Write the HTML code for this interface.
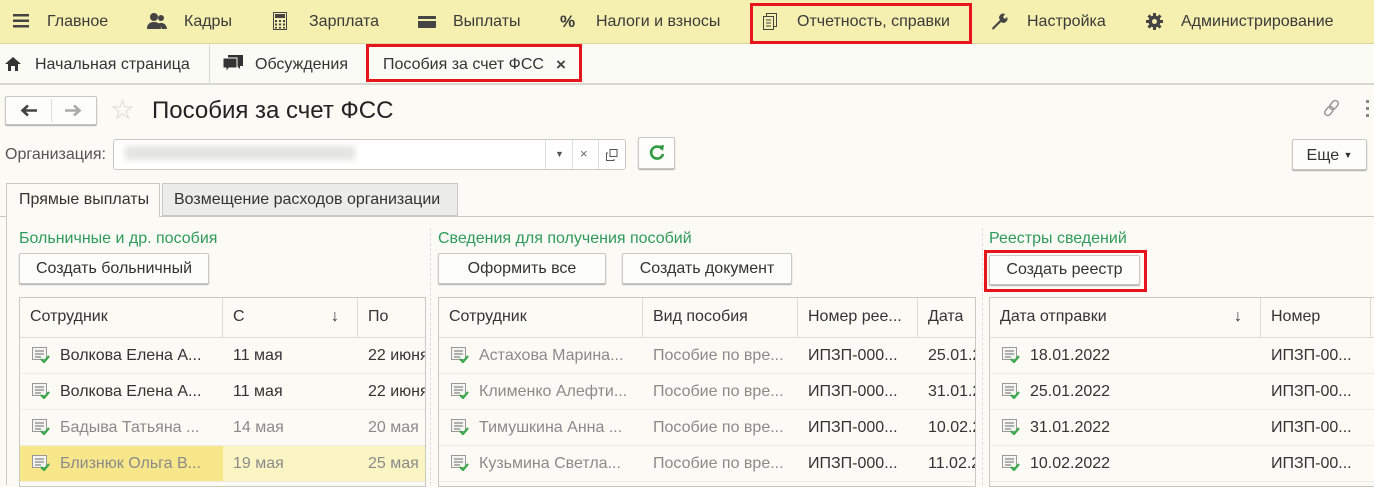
<!DOCTYPE html><html><head><meta charset="utf-8"><style>
*{box-sizing:border-box;margin:0;padding:0}
body{width:1374px;height:485px;overflow:hidden;background:#fbfaf4;font-family:"Liberation Sans",Arial,sans-serif;font-size:16px;color:#333;position:relative}
.a{position:absolute;white-space:nowrap}
.top{left:0;top:0;width:1374px;height:44px;background:#f5efb0;border-bottom:1px solid #dcd69a}
.ti{top:13px;font-size:16px;color:#3a3a3a}
.tabs{left:0;top:44px;width:1374px;height:41px;border-bottom:2px solid #d8d8d2;background:#fbfbf6}
.btn{background:#fdfdfb;border:1px solid #c9c9c3;border-radius:2px;box-shadow:0 1px 1px #aaa;text-align:center;line-height:30px;color:#333}
.red{border:3px solid #e8141b}
.grn{color:#2f9a5d;font-size:16px}
.tbl{border:1px solid #c9c9c3;background:#fbfaf4;overflow:hidden}
.hd{height:40px;border-bottom:1px solid #dcdcd6;background:#fbfaf4}
.c{position:absolute;top:0;height:100%;border-right:1px solid #dcdcd6;padding-left:10px;line-height:38px;overflow:hidden;white-space:nowrap}
.row{position:relative;height:36px;border-bottom:1px solid #ecebe4}
.row .c{line-height:36px;border-right:none}
.gray{color:#8a8a8a}
.ic{display:inline-block;vertical-align:-3px;margin-left:2px;margin-right:10px}
</style></head><body>
<div class="a top"></div>
<div class="a" style="left:13px;top:14px"><svg width="16" height="14"><rect y="0" width="16" height="2.5" fill="#444"/><rect y="5.5" width="16" height="2.5" fill="#444"/><rect y="11" width="16" height="2.5" fill="#444"/></svg></div>
<div class="a ti" style="left:47px">Главное</div>
<div class="a" style="left:146px;top:12px"><svg width="22" height="18"><circle cx="8" cy="5" r="4" fill="#444"/><path d="M1 17 Q1 10 8 10 Q15 10 15 17Z" fill="#444"/><circle cx="15" cy="6" r="3" fill="#444"/><path d="M13 11 Q20 10 21 17 H16Z" fill="#444"/></svg></div>
<div class="a ti" style="left:184px">Кадры</div>
<div class="a" style="left:273px;top:12px"><svg width="14" height="18"><rect x="0.5" y="0.5" width="13" height="17" fill="none" stroke="#444"/><rect x="2" y="2" width="10" height="4" fill="#444"/><g fill="#444"><rect x="2" y="8" width="2" height="2"/><rect x="6" y="8" width="2" height="2"/><rect x="10" y="8" width="2" height="2"/><rect x="2" y="11.5" width="2" height="2"/><rect x="6" y="11.5" width="2" height="2"/><rect x="10" y="11.5" width="2" height="2"/><rect x="2" y="15" width="2" height="1.5"/><rect x="6" y="15" width="2" height="1.5"/><rect x="10" y="15" width="2" height="1.5"/></g></svg></div>
<div class="a ti" style="left:309px">Зарплата</div>
<div class="a" style="left:418px;top:15px"><svg width="18" height="12"><rect width="18" height="12" rx="1" fill="#444"/><rect y="3" width="18" height="2" fill="#f5efb0"/></svg></div>
<div class="a ti" style="left:453px">Выплаты</div>
<div class="a ti" style="left:560px;font-weight:bold;font-size:17px;top:12px">%</div>
<div class="a ti" style="left:596px">Налоги и взносы</div>
<div class="a red" style="left:750px;top:3px;width:222px;height:41px"></div>
<div class="a" style="left:763px;top:13px"><svg width="14" height="17"><rect x="3.5" y="0.5" width="10" height="13" fill="#f5efb0" stroke="#444"/><rect x="0.5" y="3.5" width="10" height="13" fill="#f5efb0" stroke="#444"/><path d="M3 7h5M3 10h5M3 13h5" stroke="#444"/></svg></div>
<div class="a ti" style="left:797px">Отчетность, справки</div>
<div class="a" style="left:990px;top:12px"><svg width="18" height="18"><path d="M2 16 L10 8 A4 4 0 0 1 15 2 L13 5 L15 7 L17 5 A4 4 0 0 1 11 10 L3 18Z" fill="#444"/></svg></div>
<div class="a ti" style="left:1027px">Настройка</div>
<div class="a" style="left:1146px;top:13px"><svg width="17" height="17" viewBox="0 0 17 17"><g fill="#444" transform="translate(8.5 8.5)"><circle r="6"/><rect x="-1.5" y="-8.5" width="3" height="17"/><rect x="-8.5" y="-1.5" width="17" height="3"/><rect x="-1.5" y="-8.5" width="3" height="17" transform="rotate(45)"/><rect x="-1.5" y="-8.5" width="3" height="17" transform="rotate(-45)"/></g><circle cx="8.5" cy="8.5" r="2.5" fill="#f5efb0"/></svg></div>
<div class="a ti" style="left:1181px">Администрирование</div>

<div class="a tabs"></div>
<div class="a" style="left:5px;top:57px"><svg width="16" height="14"><path d="M8 0 L16 7 H13 V14 H10 V9 H6 V14 H3 V7 H0Z" fill="#333"/></svg></div>
<div class="a" style="left:35px;top:56px;color:#333">Начальная страница</div>
<div class="a" style="left:209px;top:44px;width:1px;height:40px;background:#d8d8d2"></div>
<div class="a" style="left:223px;top:55px"><svg width="20" height="18"><path d="M5 0 H20 V11 H17 V14 L14 11 H5Z" fill="#333"/><path d="M0 3 H14 V13 H6 L3 17 V13 H0Z" fill="#333" stroke="#fbfbf6" stroke-width="1"/></svg></div>
<div class="a" style="left:255px;top:56px">Обсуждения</div>
<div class="a" style="left:368px;top:44px;width:1px;height:40px;background:#d8d8d2"></div>
<div class="a red" style="left:366px;top:44px;width:216px;height:38px"></div>
<div class="a" style="left:383px;top:56px">Пособия за счет ФСС</div>
<div class="a" style="left:556px;top:55px;font-weight:bold;font-size:17px;color:#444">×</div>

<div class="a btn" style="left:5px;top:96px;width:92px;height:29px"></div>
<div class="a" style="left:20px;top:104px"><svg width="18" height="13"><path d="M17 6.5H4M8 1.5 L2.5 6.5 L8 11.5" fill="none" stroke="#444" stroke-width="2.6"/></svg></div>
<div class="a" style="left:51px;top:99px;width:1px;height:23px;background:#ddd"></div>
<div class="a" style="left:64px;top:104px"><svg width="18" height="13"><path d="M1 6.5H14M10 1.5 L15.5 6.5 L10 11.5" fill="none" stroke="#aaa" stroke-width="2.6"/></svg></div>
<div class="a" style="left:110px;top:95px;font-size:28px;color:#d6d6d0;line-height:30px">☆</div>
<div class="a" style="left:152px;top:97px;font-size:24px;color:#222">Пособия за счет ФСС</div>
<div class="a" style="left:1322px;top:98px"><svg width="20" height="20"><g fill="none" stroke="#999" stroke-width="1.5"><rect x="9" y="2" width="6" height="10" rx="3" transform="rotate(40 12 7)"/><rect x="4" y="8" width="6" height="10" rx="3" transform="rotate(40 7 13)"/></g></svg></div>
<div class="a" style="left:1366px;top:100px;width:3px;height:17px;background:repeating-linear-gradient(#888 0 3px,transparent 3px 7px)"></div>

<div class="a" style="left:5px;top:146px;color:#555">Организация:</div>
<div class="a" style="left:113px;top:139px;width:513px;height:31px;border:1px solid #c9c9c3;border-radius:3px;background:#fff"></div>
<div class="a" style="left:125px;top:146px;width:230px;height:14px;background:#e4e4e0;filter:blur(3px)"></div>
<div class="a" style="left:545px;top:140px;width:1px;height:29px;background:#ddd"></div>
<div class="a" style="left:572px;top:140px;width:1px;height:29px;background:#ddd"></div>
<div class="a" style="left:598px;top:140px;width:1px;height:29px;background:#ddd"></div>
<div class="a" style="left:555px;top:149px;font-size:9px;color:#555">▼</div>
<div class="a" style="left:580px;top:146px;font-size:13px;color:#666">×</div>
<div class="a" style="left:606px;top:148px"><svg width="12" height="12"><rect x="4" y="0.5" width="7" height="7" fill="none" stroke="#555"/><path d="M2 4 H0.5 V11.5 H8 V10" fill="none" stroke="#555"/></svg></div>
<div class="a btn" style="left:638px;top:137px;width:37px;height:32px"><svg style="margin-top:6px" width="18" height="18" viewBox="0 0 18 18"><path d="M14 5 A6 6 0 1 0 15 10" fill="none" stroke="#2e9a40" stroke-width="2.6"/><path d="M10 2 L16 1 L15 7Z" fill="#2e9a40"/></svg></div>
<div class="a btn" style="left:1292px;top:139px;width:75px;height:31px">Еще <span style="font-size:9px;vertical-align:2px">▼</span></div>

<div class="a" style="left:0;top:216px;width:1374px;height:1px;background:#c9c9c3"></div>
<div class="a" style="left:6px;top:183px;width:154px;height:34px;border:1px solid #c9c9c3;border-bottom:none;background:#fbfaf4;line-height:32px;padding-left:12px">Прямые выплаты</div>
<div class="a" style="left:162px;top:183px;width:296px;height:33px;border:1px solid #c9c9c3;background:#ececea;line-height:32px;padding-left:11px">Возмещение расходов организации</div>
<div class="a" style="left:6px;top:216px;width:1px;height:269px;background:#c9c9c3"></div>

<div class="a grn" style="left:19px;top:230px">Больничные и др. пособия</div>
<div class="a grn" style="left:438px;top:230px">Сведения для получения пособий</div>
<div class="a grn" style="left:989px;top:230px">Реестры сведений</div>
<div class="a" style="left:430px;top:228px;width:1px;height:257px;border-left:1px dashed #ddd"></div>
<div class="a" style="left:982px;top:228px;width:1px;height:257px;border-left:1px dashed #ddd"></div>

<div class="a btn" style="left:19px;top:253px;width:190px;height:31px">Создать больничный</div>
<div class="a btn" style="left:438px;top:253px;width:168px;height:31px">Оформить все</div>
<div class="a btn" style="left:622px;top:253px;width:170px;height:31px">Создать документ</div>
<div class="a red" style="left:984px;top:250px;width:163px;height:42px"></div>
<div class="a btn" style="left:989px;top:255px;width:151px;height:30px;line-height:28px">Создать реестр</div>

<svg width="0" height="0" style="position:absolute"><defs><g id="d"><rect x="0.5" y="0.5" width="14" height="12" fill="#f4f4f0" stroke="#999"/><path d="M3 4h9M3 7h9M3 10h6" stroke="#888" stroke-width="1.3"/><path d="M9 12 L12 15 L17 9" fill="none" stroke="#3aa84a" stroke-width="2.2"/></g></defs></svg>

<div class="a tbl" style="left:19px;top:297px;width:407px;height:190px">
<div class="hd" style="position:relative"><div class="c" style="left:0;width:203px">Сотрудник</div><div class="c" style="left:203px;width:135px">С<span style="position:absolute;left:108px">↓</span></div><div class="c" style="left:338px;width:80px">По</div></div>
<div class="row"><div class="c" style="left:0;width:203px"><svg class="ic" width="18" height="16"><use href="#d"/></svg>Волкова Елена А...</div><div class="c" style="left:203px">11 мая</div><div class="c" style="left:338px">22 июня</div></div>
<div class="row"><div class="c" style="left:0;width:203px"><svg class="ic" width="18" height="16"><use href="#d"/></svg>Волкова Елена А...</div><div class="c" style="left:203px">11 мая</div><div class="c" style="left:338px">22 июня</div></div>
<div class="row gray"><div class="c" style="left:0;width:203px"><svg class="ic" width="18" height="16"><use href="#d"/></svg>Бадыва Татьяна ...</div><div class="c" style="left:203px">14 мая</div><div class="c" style="left:338px">20 мая</div></div>
<div class="row gray" style="background:#fbf5c4"><div class="c" style="left:0;width:203px;background:#f7e68a"><svg class="ic" width="18" height="16"><use href="#d"/></svg>Близнюк Ольга В...</div><div class="c" style="left:203px">19 мая</div><div class="c" style="left:338px">25 мая</div></div>
</div>

<div class="a tbl" style="left:438px;top:297px;width:538px;height:190px">
<div class="hd" style="position:relative"><div class="c" style="left:0;width:204px">Сотрудник</div><div class="c" style="left:204px;width:155px">Вид пособия</div><div class="c" style="left:359px;width:120px">Номер рее...</div><div class="c" style="left:479px;width:60px">Дата</div></div>
<div class="row gray"><div class="c" style="left:0"><svg class="ic" width="18" height="16"><use href="#d"/></svg>Астахова Марина...</div><div class="c" style="left:204px">Пособие по вре...</div><div class="c" style="left:359px;color:#333">ИПЗП-000...</div><div class="c" style="left:479px;color:#333">25.01.2</div></div>
<div class="row gray"><div class="c" style="left:0"><svg class="ic" width="18" height="16"><use href="#d"/></svg>Клименко Алефти...</div><div class="c" style="left:204px">Пособие по вре...</div><div class="c" style="left:359px;color:#333">ИПЗП-000...</div><div class="c" style="left:479px;color:#333">31.01.2</div></div>
<div class="row gray"><div class="c" style="left:0"><svg class="ic" width="18" height="16"><use href="#d"/></svg>Тимушкина Анна ...</div><div class="c" style="left:204px">Пособие по вре...</div><div class="c" style="left:359px;color:#333">ИПЗП-000...</div><div class="c" style="left:479px;color:#333">10.02.2</div></div>
<div class="row gray"><div class="c" style="left:0"><svg class="ic" width="18" height="16"><use href="#d"/></svg>Кузьмина Светла...</div><div class="c" style="left:204px">Пособие по вре...</div><div class="c" style="left:359px;color:#333">ИПЗП-000...</div><div class="c" style="left:479px;color:#333">11.02.2</div></div>
</div>

<div class="a tbl" style="left:989px;top:297px;width:390px;height:190px">
<div class="hd" style="position:relative"><div class="c" style="left:0;width:271px">Дата отправки<span style="position:absolute;left:244px">↓</span></div><div class="c" style="left:271px;width:110px">Номер</div></div>
<div class="row"><div class="c" style="left:0"><svg class="ic" width="18" height="16"><use href="#d"/></svg>18.01.2022</div><div class="c" style="left:271px">ИПЗП-00...</div></div>
<div class="row"><div class="c" style="left:0"><svg class="ic" width="18" height="16"><use href="#d"/></svg>25.01.2022</div><div class="c" style="left:271px">ИПЗП-00...</div></div>
<div class="row"><div class="c" style="left:0"><svg class="ic" width="18" height="16"><use href="#d"/></svg>31.01.2022</div><div class="c" style="left:271px">ИПЗП-00...</div></div>
<div class="row"><div class="c" style="left:0"><svg class="ic" width="18" height="16"><use href="#d"/></svg>10.02.2022</div><div class="c" style="left:271px">ИПЗП-00...</div></div>
</div>
</body></html>
